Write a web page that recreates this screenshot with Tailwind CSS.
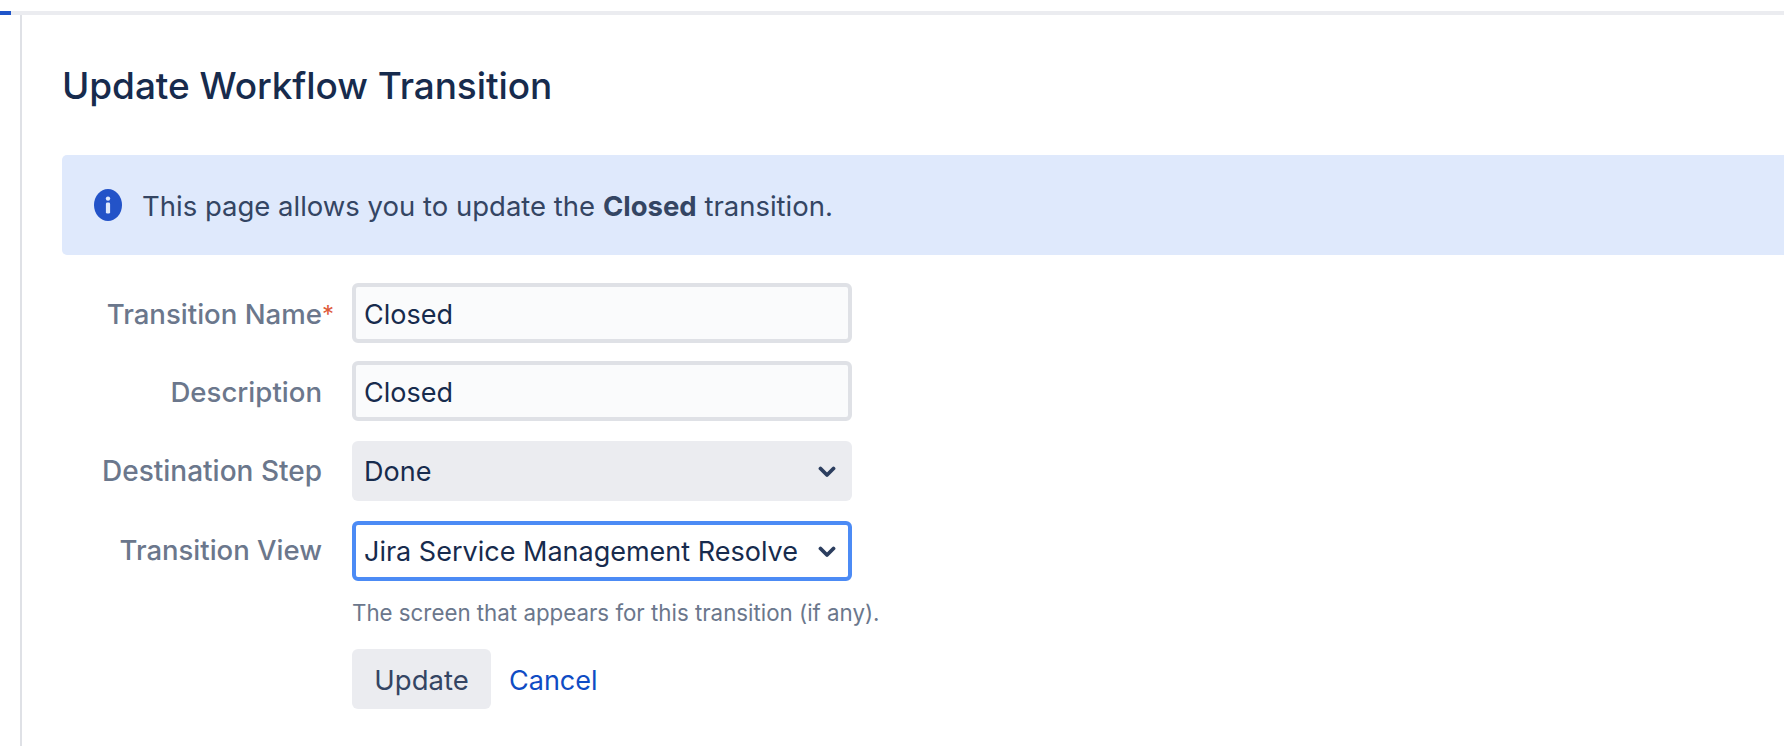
<!doctype html>
<html lang="en">
<head>
<meta charset="utf-8">
<title>Update Workflow Transition</title>
<script src="https://cdn.jsdelivr.net/npm/@tailwindcss/browser@4"></script>
</head>
<body class="bg-white font-['Inter','Noto_Sans',sans-serif] text-[#172b4d] overflow-hidden">
<div class="h-[746px] w-[1784px] flex flex-col overflow-hidden">
  <div class="mt-[11px] h-1 bg-[#ebecf0] shrink-0"><div class="h-1 w-[11px] bg-[#1f55c9]"></div></div>
  <div class="ml-5 flex-1 border-l-2 border-[#dfe1e6] pl-10">
    <h1 class="mt-[45px] h-[52px] text-[37px] leading-[52px] font-medium text-[#172b4d] tracking-[-0.07px]">Update Workflow Transition</h1>
    <div class="mt-[43px] h-[100px] bg-[#dfe9fc] rounded-l-[5px] flex items-center pl-8 text-[27.5px] text-[#344563]">
      <svg class="w-7 h-8 mr-5 shrink-0" viewBox="0 0 28 32"><ellipse cx="14" cy="16" rx="14" ry="16" fill="#2353c8"/><circle cx="14" cy="9.6" r="2.2" fill="#dfe9fc"/><rect x="11.9" y="13.6" width="4.2" height="11" rx="1.4" fill="#dfe9fc"/></svg>
      <p class="pt-[3px]">This page allows you to update the <b class="font-bold">Closed</b> transition.</p>
    </div>
    <form class="mt-7 flex flex-col">
      <div class="flex items-center h-[60px]">
        <label class="w-[260px] pt-1 text-right text-[27.6px] font-medium text-[#6b778c] relative">Transition Name<span class="absolute left-full top-[7px] text-[24px] text-[#de5a3a] font-normal">*</span></label>
        <input class="ml-[30px] w-[500px] h-[60px] border-4 border-[#dfe1e6] rounded-[6px] bg-[#fafbfc] pl-2 pr-[9px] pt-[2px] text-[27px] text-[#172b4d]" value="Closed">
      </div>
      <div class="flex items-center h-[60px] mt-[18px]">
        <label class="w-[260px] pt-1 text-right text-[27.6px] font-medium text-[#6b778c]">Description</label>
        <input class="ml-[30px] w-[500px] h-[60px] border-4 border-[#dfe1e6] rounded-[6px] bg-[#fafbfc] pl-2 pr-[9px] pt-[2px] text-[27px] text-[#172b4d]" value="Closed">
      </div>
      <div class="flex items-center h-[60px] mt-5">
        <label class="w-[260px] text-right text-[28px] font-medium text-[#6b778c]">Destination Step</label>
        <div class="ml-[30px] w-[500px] h-[60px] relative">
          <select class="appearance-none w-full h-full rounded-[6px] bg-[#ebecf0] pl-3 pr-[13px] pt-[2px] text-[27px] text-[#172b4d]"><option>Done</option></select>
          <svg class="absolute right-4 top-[25px] w-[18px] h-3" viewBox="0 0 18 12" fill="none"><path d="M2.5 2.5 9 9 15.5 2.5" stroke="#2c3e5f" stroke-width="3.8" stroke-linecap="round" stroke-linejoin="round"/></svg>
        </div>
      </div>
      <div class="flex items-center h-[60px] mt-5">
        <label class="w-[260px] text-right text-[27.5px] font-medium text-[#6b778c]">Transition View</label>
        <div class="ml-[30px] w-[500px] h-[60px] relative">
          <select class="appearance-none w-full h-full rounded-[6px] bg-white border-4 border-[#4c8bf5] pl-2 pr-[9px] pt-[2px] text-[27px] text-[#172b4d]"><option>Jira Service Management Resolve</option></select>
          <svg class="absolute right-4 top-[25px] w-[18px] h-3" viewBox="0 0 18 12" fill="none"><path d="M2.5 2.5 9 9 15.5 2.5" stroke="#2c3e5f" stroke-width="3.8" stroke-linecap="round" stroke-linejoin="round"/></svg>
        </div>
      </div>
      <p class="ml-[290px] mt-[17px] text-[22.3px] leading-[30px] text-[#6b778c]">The screen that appears for this transition (if any).</p>
      <div class="ml-[290px] mt-[21px] flex items-center">
        <button type="button" class="w-[139px] h-[60px] rounded-[6px] bg-[#ebecf0] pt-1 text-[27.5px] text-[#344563]">Update</button>
        <a class="ml-[18px] pt-1 text-[27px] text-[#0f4cc4]" href="#">Cancel</a>
      </div>
    </form>
  </div>
</div>
</body>
</html>
